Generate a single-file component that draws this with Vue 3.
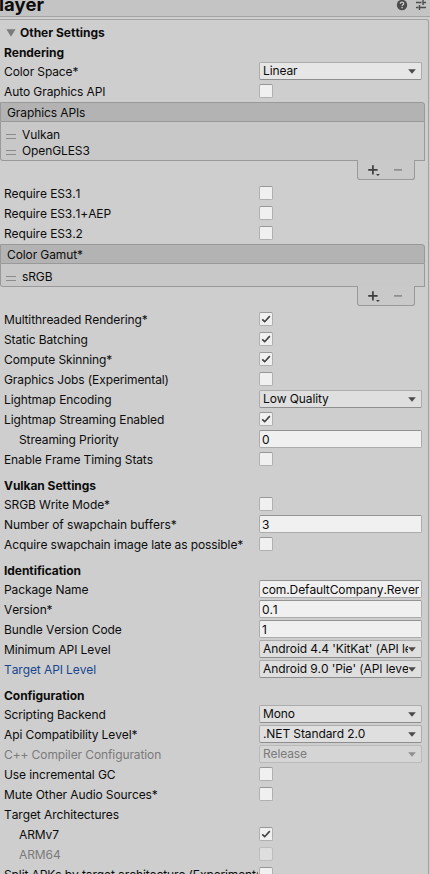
<template>
  <div class="inspector">
    <header class="title-bar">
      <h1 class="title">layer</h1>
      <div class="title-icons">
        <svg width="12" height="12" viewBox="0 0 12 12">
          <circle cx="6" cy="6" r="5.2" fill="#4c4c4c" />
          <path d="M4.3 4.7C4.4 2.5 7.8 2.6 7.7 4.6C7.6 5.7 6.1 5.7 6.1 7" fill="none" stroke="#cbcbcb" stroke-width="1.3" />
          <rect x="5.4" y="7.9" width="1.4" height="1.4" fill="#cbcbcb" />
        </svg>
        <svg width="12" height="12" viewBox="0 0 12 12">
          <path d="M1 3.5H6.5M8 3.5H11M8 1V6M1 8.5H3.5M5 8.5H11M4.5 6V11" fill="none" stroke="#4c4c4c" stroke-width="1.4" />
        </svg>
      </div>
    </header>

    <main class="panel">
      <div class="foldout">
        <svg width="10" height="8" viewBox="0 0 10 8"><path d="M0.4 0.3H9.6L5 7.8Z" fill="#7b7b7b" /></svg>
        <span>Other Settings</span>
      </div>

      <template v-for="(row, i) in rows" :key="i">
        <h2 v-if="row.type === 'heading'" class="heading" :class="{ first: row.first }">{{ row.label }}</h2>

        <!-- reorderable list -->
        <section v-else-if="row.type === 'list'" class="list">
          <div class="list-header">{{ row.label }}</div>
          <div class="list-body">
            <div v-for="item in row.items" :key="item" class="list-item">
              <span class="handle"></span>
              <span>{{ item }}</span>
            </div>
          </div>
          <div class="list-footer">
            <svg width="14" height="14" viewBox="0 0 14 14">
              <path d="M0.2 6.9H9.6M4.9 2.2V11.6" fill="none" stroke="#3e3e3e" stroke-width="1.7" />
              <path d="M8 11H11.8L9.9 12.9Z" fill="#3e3e3e" />
            </svg>
            <svg width="10" height="14" viewBox="0 0 10 14">
              <path d="M1 6.9H9" stroke="#868686" stroke-width="1.5" />
            </svg>
          </div>
        </section>

        <!-- label + field -->
        <div v-else class="row" :class="{ disabled: row.disabled }">
          <span class="label" :class="{ indent: row.indent, active: row.active }">{{ row.label }}</span>
          <button
            v-if="row.type === 'toggle'"
            class="toggle"
            :disabled="row.disabled"
            @click="row.value = !row.value"
          >
            <svg v-if="row.value" width="12" height="12" viewBox="0 0 12 12">
              <path d="M2.2 6.3L4.7 8.7L9.8 3.1" fill="none" stroke="#404040" stroke-width="1.6" />
            </svg>
          </button>
          <div v-else-if="row.type === 'popup'" class="popup" :class="{ hovered: row.hovered }">
            <span class="popup-text">{{ row.value }}</span>
            <svg class="arrow" width="8" height="5" viewBox="0 0 8 5"><path d="M0.2 0.3H7.8L4 4.8Z" fill="#4a4a4a" /></svg>
          </div>
          <div v-else-if="row.type === 'text'" class="text-field"><span>{{ row.value }}</span></div>
        </div>
      </template>
    </main>
  </div>
</template>

<script setup>
import { reactive } from "vue";

const heading = (label, first = false) => ({ type: "heading", label, first });
const toggle = (label, value = false, extra = {}) => ({ type: "toggle", label, value, ...extra });
const popup = (label, value, extra = {}) => ({ type: "popup", label, value, ...extra });
const text = (label, value, extra = {}) => ({ type: "text", label, value, ...extra });

const rows = reactive([
  heading("Rendering", true),
  popup("Color Space*", "Linear", { hovered: true }),
  toggle("Auto Graphics API"),
  { type: "list", label: "Graphics APIs", items: ["Vulkan", "OpenGLES3"] },
  toggle("Require ES3.1"),
  toggle("Require ES3.1+AEP"),
  toggle("Require ES3.2"),
  { type: "list", label: "Color Gamut*", items: ["sRGB"] },
  toggle("Multithreaded Rendering*", true),
  toggle("Static Batching", true),
  toggle("Compute Skinning*", true),
  toggle("Graphics Jobs (Experimental)"),
  popup("Lightmap Encoding", "Low Quality"),
  toggle("Lightmap Streaming Enabled", true),
  text("Streaming Priority", "0", { indent: true }),
  toggle("Enable Frame Timing Stats"),

  heading("Vulkan Settings"),
  toggle("SRGB Write Mode*"),
  text("Number of swapchain buffers*", "3"),
  toggle("Acquire swapchain image late as possible*"),

  heading("Identification"),
  text("Package Name", "com.DefaultCompany.ReverseGame"),
  text("Version*", "0.1"),
  text("Bundle Version Code", "1"),
  popup("Minimum API Level", "Android 4.4 'KitKat' (API level 19)"),
  popup("Target API Level", "Android 9.0 'Pie' (API level 28)", { active: true }),

  heading("Configuration"),
  popup("Scripting Backend", "Mono"),
  popup("Api Compatibility Level*", ".NET Standard 2.0"),
  popup("C++ Compiler Configuration", "Release", { disabled: true }),
  toggle("Use incremental GC"),
  toggle("Mute Other Audio Sources*"),
  { type: "label", label: "Target Architectures" },
  toggle("ARMv7", true, { indent: true }),
  toggle("ARM64", false, { indent: true, disabled: true }),
  toggle("Split APKs by target architecture (Experimental)"),
]);
</script>

<style>
body {
  margin: 0;
  overflow: hidden;
}
</style>

<style scoped>
.inspector {
  display: flex;
  flex-direction: column;
  width: 430px;
  height: 874px;
  overflow: hidden;
  background: #cecece;
  color: #0c0c0c;
  font-family: Inter, "Liberation Sans", sans-serif;
  font-size: 12px;
  line-height: 18px;
  letter-spacing: -0.1px;
  font-kerning: none;
  white-space: nowrap;
}

.title-bar {
  display: flex;
  justify-content: space-between;
  flex: none;
  box-sizing: border-box;
  height: 17px;
  background: #c4c4c4;
  border-bottom: 1px solid #a4a4a4;
}

.title {
  margin: -8px 0 0 -1px;
  font-size: 18.5px;
  font-weight: 700;
  line-height: 24px;
}

.title-icons {
  display: flex;
  gap: 7px;
  padding-right: 3px;
  margin-top: -1px;
}

.panel {
  flex: none;
  box-sizing: border-box;
  width: 429px;
  height: 870px;
  margin-top: 2px;
  border-top: 1px solid #a2a2a2;
  border-right: 1px solid #a2a2a2;
  border-top-right-radius: 3px;
}

.foldout {
  display: flex;
  align-items: center;
  gap: 4px;
  height: 23px;
  padding: 1px 0 0 6px;
  font-weight: 700;
  letter-spacing: 0;
}

.heading {
  height: 18px;
  margin: 8px 0 0;
  padding: 1px 0 0 4px;
  font-size: 12px;
  font-weight: 700;
  letter-spacing: -0.05px;
}

.heading.first {
  margin-top: -1px;
}

.row {
  display: flex;
  align-items: center;
  height: 18px;
  margin-bottom: 2px;
}

.label {
  flex: none;
  box-sizing: border-box;
  width: 258px;
  margin-right: 1px;
  padding: 1px 0 0 4px;
  overflow: hidden;
}

.label.indent {
  padding-left: 19px;
}

.label.active {
  color: #17478f;
}

.toggle {
  display: flex;
  align-items: center;
  justify-content: center;
  box-sizing: border-box;
  width: 14px;
  height: 14px;
  padding: 0;
  background: #f0f0f0;
  border: 1px solid #b0b0b0;
  border-top-color: #989898;
  border-radius: 2px;
}

.popup,
.text-field {
  display: flex;
  box-sizing: border-box;
  width: 163px;
  height: 18px;
  line-height: 16px;
  border: 1px solid #acacac;
  border-radius: 2px;
}

.popup {
  align-items: center;
  padding: 0 5px 0 3px;
  background: #dfdfdf;
  border-bottom-color: #8e8e8e;
}

.popup.hovered {
  background: #e6e6e6;
}

.popup-text {
  flex: 1;
  overflow: hidden;
}

.arrow {
  flex: none;
}

.text-field {
  padding: 0 2px;
  background: #f0f0f0;
  border-top-color: #939393;
}

.text-field span {
  flex: 1;
  padding-top: 1px;
  overflow: hidden;
}

.disabled .label,
.disabled .popup-text {
  color: #7b7b7b;
}

.disabled .popup {
  background: #d5d5d5;
  border-color: #bababa;
}

.disabled .arrow {
  opacity: 0.5;
}

.disabled .toggle {
  background: #dedede;
  border-color: #bdbdbd;
}

.list {
  width: 425px;
  margin-bottom: 4px;
}

.list-header {
  box-sizing: border-box;
  height: 20px;
  padding: 1px 0 0 6px;
  background: #b3b3b3;
  border: 1px solid #999;
  border-radius: 0 3px 0 0;
}

.list-body {
  padding: 5px 6px 1px 5px;
  background: #c8c8c8;
  border: 1px solid #999;
  border-top: none;
  border-radius: 0 0 0 3px;
}

.list-item {
  display: flex;
  align-items: center;
  gap: 6px;
  height: 16px;
  line-height: 16px;
}

.handle {
  box-sizing: border-box;
  width: 10px;
  height: 5px;
  margin-top: 2px;
  border: solid #8b8b8b;
  border-width: 1px 0;
}

/* covers the bottom line of the list so that both read as one shape */
.list-footer {
  position: relative;
  display: flex;
  gap: 11px;
  box-sizing: border-box;
  width: 58px;
  height: 20px;
  margin: -1px 10px 0 auto;
  padding: 3px 0 0 10px;
  background: #c9c9c9;
  border: 1px solid #999;
  border-top: none;
  border-radius: 0 0 3px 3px;
}
</style>
